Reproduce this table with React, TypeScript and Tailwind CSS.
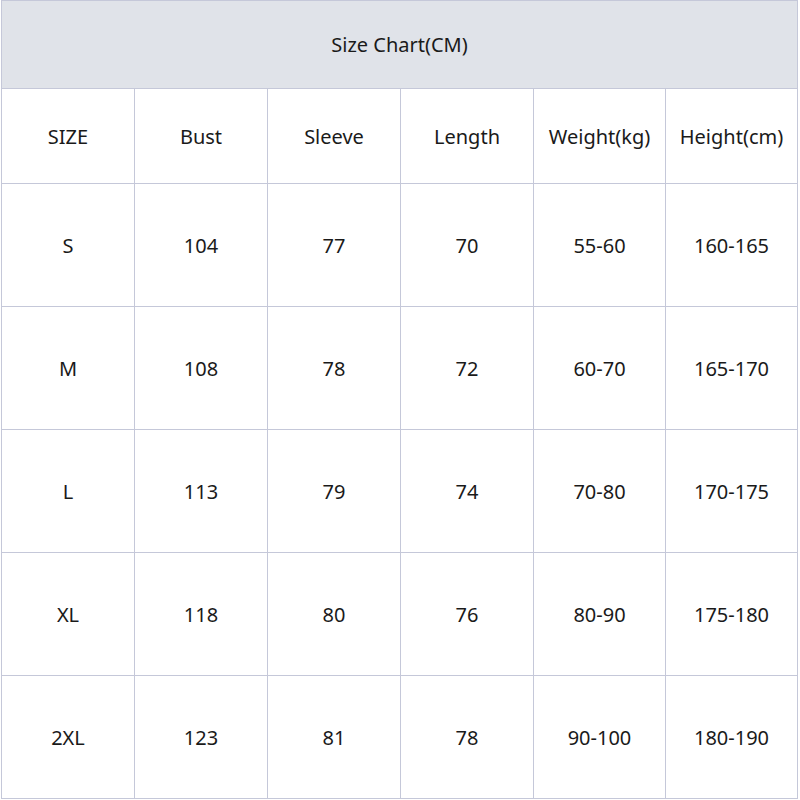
const headers = ["SIZE", "Bust", "Sleeve", "Length", "Weight(kg)", "Height(cm)"];

const rows = [
  ["S", "104", "77", "70", "55-60", "160-165"],
  ["M", "108", "78", "72", "60-70", "165-170"],
  ["L", "113", "79", "74", "70-80", "170-175"],
  ["XL", "118", "80", "76", "80-90", "175-180"],
  ["2XL", "123", "81", "78", "90-100", "180-190"],
];

const cols = "grid grid-cols-[133px_133px_133px_133px_132px_132px]";

export default function App() {
  return (
    <div className="w-[800px] h-[800px] bg-white pl-px" style={{ fontFamily: '"Noto Sans", "Open Sans", sans-serif' }}>
      <div className="w-[797px] border-l border-t border-[#c5c8d9] text-[#1a1a1a] text-[20px]">
        <div className="h-[88px] bg-[#e0e3e9] border-r border-b border-[#c5c8d9] flex items-center justify-center">
          Size Chart(CM)
        </div>
        <div className={cols}>
          {headers.map((h) => (
            <div key={h} className="h-[95px] pt-[2px] border-r border-b border-[#c5c8d9] flex items-center justify-center">
              {h}
            </div>
          ))}
        </div>
        {rows.map((r) => (
          <div key={r[0]} className={cols}>
            {r.map((c, i) => (
              <div key={i} className="h-[123px] pt-[2px] border-r border-b border-[#c5c8d9] flex items-center justify-center">
                {c}
              </div>
            ))}
          </div>
        ))}
      </div>
    </div>
  );
}
